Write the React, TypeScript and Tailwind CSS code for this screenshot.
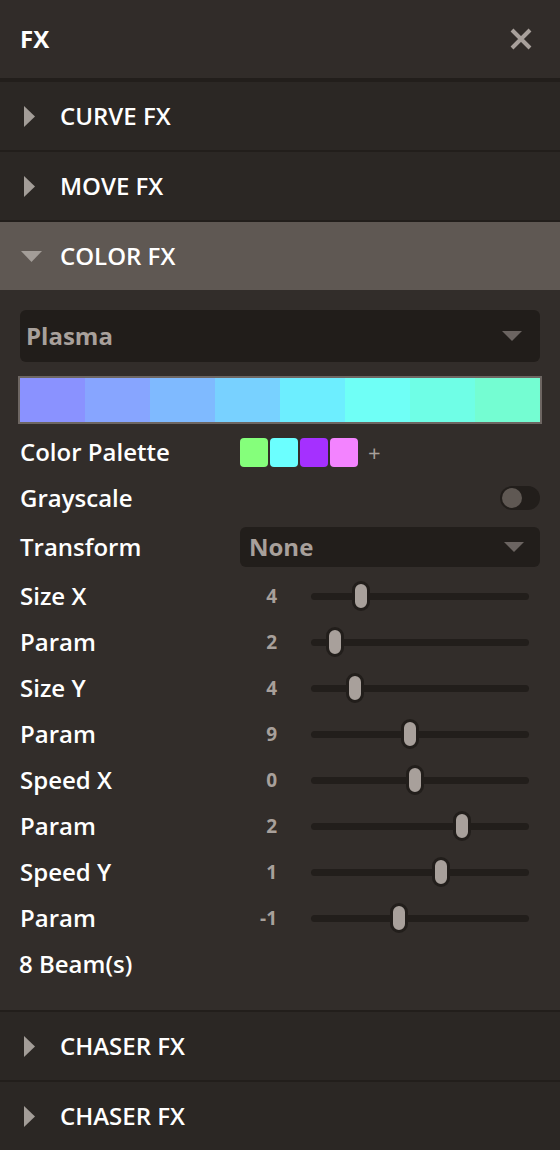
import React from "react";

const font = { fontFamily: '"Open Sans", "Liberation Sans", sans-serif' };

function TriRight() {
  return (
    <svg width="11" height="21" viewBox="0 0 11 21" className="block">
      <polygon points="0,0 11,10.5 0,21" fill="#a39d98" />
    </svg>
  );
}
function TriDown() {
  return (
    <svg width="21" height="11" viewBox="0 0 21 11" className="block">
      <polygon points="0,0 21,0 10.5,11" fill="#a39d98" />
    </svg>
  );
}
function Caret() {
  return (
    <svg width="20" height="10" viewBox="0 0 20 10" className="block">
      <polygon points="0,0 20,0 10,10" fill="#6b6461" />
    </svg>
  );
}

function Section({ title, open }: { title: string; open?: boolean }) {
  return (
    <div
      className={`h-[70px] border-t-2 border-[#221e1b] flex items-center ${
        open ? "bg-[#5f5853]" : "bg-[#2b2724]"
      }`}
    >
      <div className={open ? "w-[60px] pl-[21px]" : "w-[60px] pl-[24px]"}>
        {open ? <TriDown /> : <TriRight />}
      </div>
      <span className="text-white text-[24px] font-semibold leading-none">{title}</span>
    </div>
  );
}

const gradient = ["#8a92ff", "#87a5ff", "#7fbaff", "#78d1ff", "#6deeff", "#6ffff6", "#6ffee6", "#74fdd2"];
const swatches = ["#85ff7b", "#6bffff", "#a530ff", "#f383ff"];

const sliders: { label: string; value: string; pos: number }[] = [
  { label: "Size X", value: "4", pos: 50 },
  { label: "Param", value: "2", pos: 24 },
  { label: "Size Y", value: "4", pos: 44 },
  { label: "Param", value: "9", pos: 99 },
  { label: "Speed X", value: "0", pos: 104 },
  { label: "Param", value: "2", pos: 151 },
  { label: "Speed Y", value: "1", pos: 130 },
  { label: "Param", value: "-1", pos: 88 },
];

export default function App() {
  return (
    <div style={font} className="w-[560px] h-[1150px] bg-[#322d2a] overflow-hidden">
      {/* header */}
      <div className="h-[82px] bg-[#312c29] border-b-4 border-[#221e1b] flex items-center justify-between pl-[20px] pr-[28px]">
        <span className="text-white text-[24px] font-bold leading-none">FX</span>
        <svg width="22" height="22" viewBox="0 0 22 22" className="block">
          <path d="M2 2 L20 20 M20 2 L2 20" stroke="#a8a09b" strokeWidth="4" />
        </svg>
      </div>
      <div className="-mt-[2px]">
        <Section title="CURVE FX" />
        <Section title="MOVE FX" />
        <Section title="COLOR FX" open />
      </div>

      {/* content */}
      <div className="bg-[#322d2a] px-[20px] pt-[20px] pb-[23px]">
        <div className="h-[52px] rounded-[6px] bg-[#211d1a] flex items-center justify-between pl-[6px] pr-[18px]">
          <span className="text-[#a8a09b] text-[24px] font-bold leading-none">Plasma</span>
          <Caret />
        </div>
        <div className="mt-[14px] -mx-[2px] h-[48px] border-2 border-[#6d6662] flex">
          {gradient.map((c, i) => (
            <div key={i} className="flex-1" style={{ backgroundColor: c }} />
          ))}
        </div>

        <div className="mt-[5px] h-[46px] flex items-center">
          <span className="w-[220px] text-white text-[24px] font-semibold leading-none">Color Palette</span>
          <div className="flex items-center gap-[2px]">
            {swatches.map((c) => (
              <div key={c} className="w-[28px] h-[29px] rounded-[4px]" style={{ backgroundColor: c }} />
            ))}
            <span className="ml-[8px] text-[#a8a09b] text-[22px] leading-none font-normal">+</span>
          </div>
        </div>

        <div className="h-[46px] flex items-center justify-between">
          <span className="text-white text-[24px] font-semibold leading-none">Grayscale</span>
          <div className="w-[40px] h-[24px] rounded-full bg-[#221e1b] flex items-center pl-[2px]">
            <div className="w-[20px] h-[20px] rounded-full bg-[#5f5853]" />
          </div>
        </div>

        <div className="h-[52px] flex items-center">
          <span className="w-[220px] text-white text-[24px] font-semibold leading-none">Transform</span>
          <div className="flex-1 h-[40px] rounded-[6px] bg-[#221e1b] flex items-center justify-between pl-[9px] pr-[16px]">
            <span className="text-[#a8a09b] text-[24px] font-bold leading-none">None</span>
            <Caret />
          </div>
        </div>

        {sliders.map((s, i) => (
          <div key={i} className="h-[46px] flex items-center">
            <span className="w-[220px] text-white text-[24px] font-semibold leading-none">{s.label}</span>
            <span className="w-[37px] text-right text-[#a8a09b] text-[19px] font-bold leading-none">{s.value}</span>
            <div className="ml-[34px] w-[218px] h-[7px] rounded-full bg-[#221e1b] relative">
              <div
                className="absolute top-1/2 -translate-y-1/2 -translate-x-1/2 w-[18px] h-[30px] rounded-full bg-[#a8a09b] border-[3px] border-[#221e1b]"
                style={{ left: s.pos }}
              />
            </div>
          </div>
        ))}

        <div className="h-[46px] flex items-center -ml-[1px]">
          <span className="text-white text-[24px] font-semibold leading-none">8 Beam(s)</span>
        </div>
      </div>

      <Section title="CHASER FX" />
      <Section title="CHASER FX" />
    </div>
  );
}
